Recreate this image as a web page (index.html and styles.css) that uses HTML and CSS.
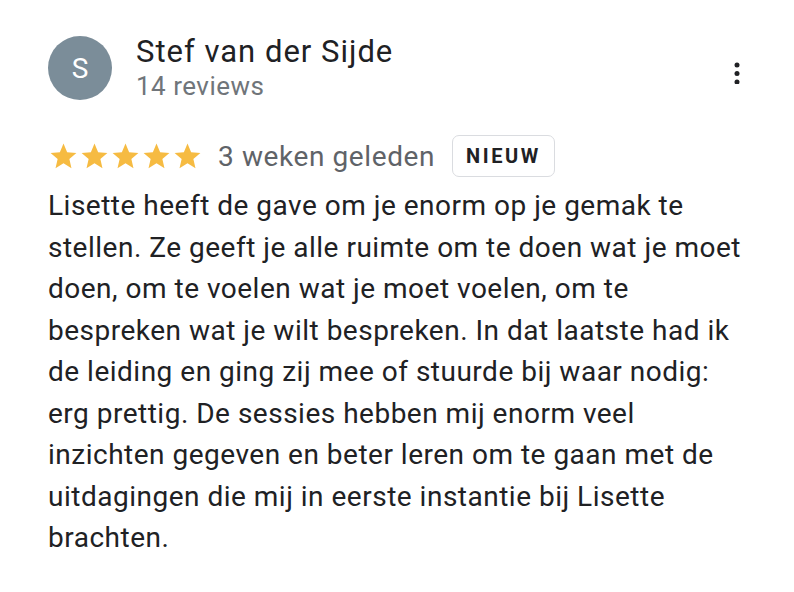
FILE: index.html
```html
<!DOCTYPE html>
<html lang="nl">
<head>
<meta charset="utf-8">
<link rel="stylesheet" href="styles.css">
</head>
<body>
<div class="review">
  <div class="header">
    <div class="avatar">S</div>
    <div class="who">
      <div class="name">Stef van der Sijde</div>
      <div class="count">14 reviews</div>
    </div>
    <div class="more">
      <svg width="24" height="24" viewBox="0 0 24 24"><circle cx="12" cy="5" r="2.5"/><circle cx="12" cy="13.5" r="2.5"/><circle cx="12" cy="22" r="2.5"/></svg>
    </div>
  </div>
  <div class="meta">
    <div class="stars">
      <svg class="star" viewBox="0 0 24 24"><path d="M12 17.27L18.18 21l-1.64-7.03L22 9.24l-7.19-.61L12 2 9.19 8.63 2 9.24l5.46 4.73L5.82 21z"/></svg>
      <svg class="star" viewBox="0 0 24 24"><path d="M12 17.27L18.18 21l-1.64-7.03L22 9.24l-7.19-.61L12 2 9.19 8.63 2 9.24l5.46 4.73L5.82 21z"/></svg>
      <svg class="star" viewBox="0 0 24 24"><path d="M12 17.27L18.18 21l-1.64-7.03L22 9.24l-7.19-.61L12 2 9.19 8.63 2 9.24l5.46 4.73L5.82 21z"/></svg>
      <svg class="star" viewBox="0 0 24 24"><path d="M12 17.27L18.18 21l-1.64-7.03L22 9.24l-7.19-.61L12 2 9.19 8.63 2 9.24l5.46 4.73L5.82 21z"/></svg>
      <svg class="star" viewBox="0 0 24 24"><path d="M12 17.27L18.18 21l-1.64-7.03L22 9.24l-7.19-.61L12 2 9.19 8.63 2 9.24l5.46 4.73L5.82 21z"/></svg>
    </div>
    <span class="date">3 weken geleden</span>
    <span class="badge">NIEUW</span>
  </div>
  <p class="text">Lisette heeft de gave om je enorm op je gemak te<br>stellen. Ze geeft je alle ruimte om te doen wat je moet<br>doen, om te voelen wat je moet voelen, om te<br>bespreken wat je wilt bespreken. In dat laatste had ik<br>de leiding en ging zij mee of stuurde bij waar nodig:<br>erg prettig. De sessies hebben mij enorm veel<br>inzichten gegeven en beter leren om te gaan met de<br>uitdagingen die mij in eerste instantie bij Lisette<br>brachten.</p>
</div>
</body>
</html>
```
FILE: styles.css
```css
html, body {
  margin: 0;
  padding: 0;
  background: #ffffff;
}
body {
  font-family: Roboto, "Liberation Sans", Arial, sans-serif;
  color: #202124;
}
.review {
  padding: 36px 40px 0 48px;
}
.header {
  display: flex;
  align-items: flex-start;
}
.avatar {
  width: 64px;
  height: 64px;
  border-radius: 50%;
  background: #7b8d99;
  color: #ffffff;
  font-size: 28px;
  display: flex;
  align-items: center;
  justify-content: center;
  flex: none;
}
.who {
  margin-left: 24px;
  margin-top: -2px;
  flex: 1;
}
.name {
  font-size: 31px;
  line-height: 36px;
  letter-spacing: 1px;
  color: #202124;
}
.count {
  font-size: 26px;
  line-height: 32px;
  letter-spacing: 0.5px;
  color: #70757a;
}
.more {
  margin-top: 24px;
  margin-right: 5px;
  fill: #202124;
}
.more svg {
  display: block;
}
.meta {
  display: flex;
  align-items: center;
  margin-top: 33px;
}
.stars {
  display: flex;
}
.star {
  width: 31px;
  height: 31px;
  fill: #f6bb42;
  display: block;
}
.date {
  margin-left: 15px;
  font-size: 28px;
  letter-spacing: 0.6px;
  color: #5f6368;
}
.badge {
  margin-left: 17px;
  border: 1px solid #dadce0;
  border-radius: 7px;
  padding: 9px 13px 9px 13px;
  font-size: 20px;
  line-height: 22px;
  font-weight: 700;
  letter-spacing: 2.6px;
  color: #202124;
}
.text {
  margin: 8px 0 0 0;
  font-size: 28px;
  line-height: 41.5px;
  letter-spacing: 0.5px;
  color: #202124;
}
```
